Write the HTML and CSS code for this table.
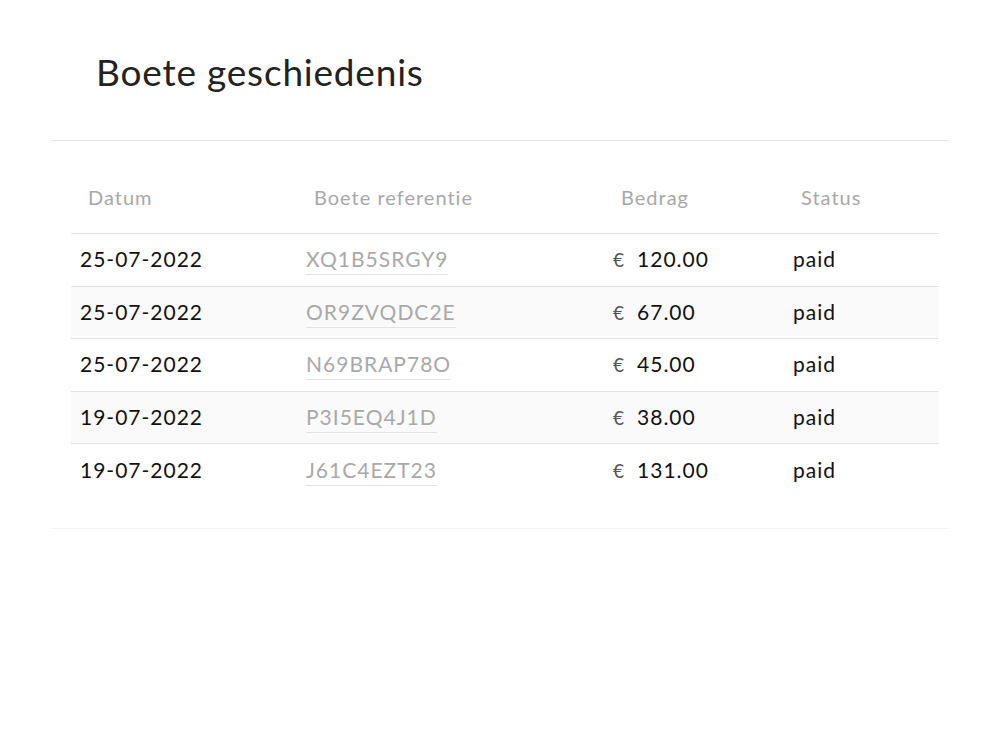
FILE: index.html
```html
<!DOCTYPE html>
<html lang="nl">

<head>
    <meta charset="UTF-8">
    <meta name="viewport" content="width=device-width, initial-scale=1.0">
    <title>Boete geschiedenis</title>
    <link rel="stylesheet" href="styles.css">
</head>

<body>
    <h1 class="title">Boete geschiedenis</h1>

    <div class="card">
        <div class="fines">
            <div class="row head">
                <div class="cell">Datum</div>
                <div class="cell">Boete referentie</div>
                <div class="cell">Bedrag</div>
                <div class="cell">Status</div>
            </div>
            <div class="row">
                <div class="cell">25-07-2022</div>
                <div class="cell"><a class="ref">XQ1B5SRGY9</a></div>
                <div class="cell"><span class="eur">€</span>120.00</div>
                <div class="cell">paid</div>
            </div>
            <div class="row">
                <div class="cell">25-07-2022</div>
                <div class="cell"><a class="ref">OR9ZVQDC2E</a></div>
                <div class="cell"><span class="eur">€</span>67.00</div>
                <div class="cell">paid</div>
            </div>
            <div class="row">
                <div class="cell">25-07-2022</div>
                <div class="cell"><a class="ref">N69BRAP78O</a></div>
                <div class="cell"><span class="eur">€</span>45.00</div>
                <div class="cell">paid</div>
            </div>
            <div class="row">
                <div class="cell">19-07-2022</div>
                <div class="cell"><a class="ref">P3I5EQ4J1D</a></div>
                <div class="cell"><span class="eur">€</span>38.00</div>
                <div class="cell">paid</div>
            </div>
            <div class="row">
                <div class="cell">19-07-2022</div>
                <div class="cell"><a class="ref">J61C4EZT23</a></div>
                <div class="cell"><span class="eur">€</span>131.00</div>
                <div class="cell">paid</div>
            </div>
        </div>
    </div>
</body>

</html>
```

FILE: styles.css
```css
body {
    margin: 0;
    background: #fff;
    font-family: "Lato", "Noto Sans", sans-serif;
    color: #111;
}

.title {
    margin: 0;
    padding: 48px 0 0 96px;
    height: 140px;
    box-sizing: border-box;
    font-size: 37px;
    font-weight: 400;
    letter-spacing: 0.8px;
    color: #222;
    line-height: 48px;
}

/* kaart met lijn boven en onder */
.card {
    margin: 0 51px;
    border-top: 1px solid #e3e3e3;
    border-bottom: 1px solid #f3f3f3;
    padding: 22px 10px 32px 20px;
}

.row {
    display: grid;
    grid-template-columns: 226px 307px 180px 1fr;
    height: 52.6px;
    align-items: center;
    border-top: 1px solid #e2e2e2;
    box-sizing: border-box;
    font-size: 21px;
    letter-spacing: 1px;
}

.row:nth-child(odd) {
    background: #fafafa;
}

.cell {
    padding-left: 9px;
    padding-bottom: 2px;
}

.head {
    border-top: none;
    height: 70px;
    font-size: 20px;
    letter-spacing: 1px;
    color: #a8a8a8;
}

.head.row {
    background: none;
}

.head .cell {
    padding-left: 17px;
}

.ref {
    color: #a9a9a9;
    border-bottom: 1px solid #e3e3e3;
    padding-bottom: 3px;
}

.eur {
    color: #555;
    font-size: 19px;
    margin-right: 12px;
}
```
